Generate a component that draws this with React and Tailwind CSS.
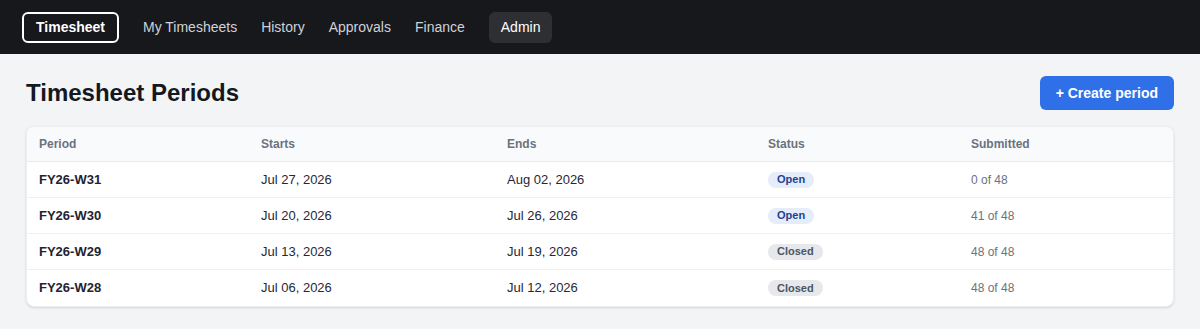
import React from "react";

const rows = [
  { p: "FY26-W31", s: "Jul 27, 2026", e: "Aug 02, 2026", open: true, sub: "0 of 48" },
  { p: "FY26-W30", s: "Jul 20, 2026", e: "Jul 26, 2026", open: true, sub: "41 of 48" },
  { p: "FY26-W29", s: "Jul 13, 2026", e: "Jul 19, 2026", open: false, sub: "48 of 48" },
  { p: "FY26-W28", s: "Jul 06, 2026", e: "Jul 12, 2026", open: false, sub: "48 of 48" },
];

const cols = "grid grid-cols-[222px_246px_261px_203px_1fr]";

export default function App() {
  return (
    <div className="min-h-[329px] bg-[#f3f4f6] font-['Liberation_Sans',Arial,sans-serif]">
      <nav className="h-[54px] bg-[#17181c] flex items-center gap-6 px-[22px]">
        <div className="h-[31px] flex items-center px-3 border-2 border-white rounded-md text-white text-sm font-bold">
          Timesheet
        </div>
        <span className="text-sm text-[#cfd2d8]">My Timesheets</span>
        <span className="text-sm text-[#cfd2d8]">History</span>
        <span className="text-sm text-[#cfd2d8]">Approvals</span>
        <span className="text-sm text-[#cfd2d8]">Finance</span>
        <span className="h-[31px] flex items-center px-3 rounded-md bg-[#2e2f33] text-sm text-white">Admin</span>
      </nav>
      <main className="px-[26px] pt-[22px] pb-[23px]">
        <div className="flex items-center justify-between h-[34px]">
          <h1 className="text-2xl font-bold text-[#141821] leading-none">Timesheet Periods</h1>
          <button className="h-[34px] px-4 rounded-md bg-[#2f6fe8] text-white text-sm font-bold">
            + Create period
          </button>
        </div>
        <div className="mt-4 bg-white border border-[#eceef1] rounded-lg shadow-sm overflow-hidden">
          <div className={`${cols} h-[35px] items-center bg-[#f9fafb] border-b border-[#e8eaed] text-xs font-bold text-[#6b7280]`}>
            <div className="px-3">Period</div>
            <div className="px-3">Starts</div>
            <div className="px-3">Ends</div>
            <div className="px-3">Status</div>
            <div className="px-3">Submitted</div>
          </div>
          {rows.map((r, i) => (
            <div
              key={r.p}
              className={`${cols} h-[36px] items-center text-[13px] text-[#1f2937] ${i < rows.length - 1 ? "border-b border-[#f0f1f3]" : ""}`}
            >
              <div className="px-3 font-bold text-[#1f2430]">{r.p}</div>
              <div className="px-3">{r.s}</div>
              <div className="px-3">{r.e}</div>
              <div className="px-3 flex">
                {r.open ? (
                  <span className="px-[9px] h-[16px] flex items-center rounded-full bg-[#e5edfb] text-[11px] font-bold text-[#1e3f94]">Open</span>
                ) : (
                  <span className="px-[9px] h-[16px] flex items-center rounded-full bg-[#e6e8eb] text-[11px] font-bold text-[#4b5563]">Closed</span>
                )}
              </div>
              <div className="px-3 text-xs text-[#6b7280]">{r.sub}</div>
            </div>
          ))}
        </div>
      </main>
    </div>
  );
}
